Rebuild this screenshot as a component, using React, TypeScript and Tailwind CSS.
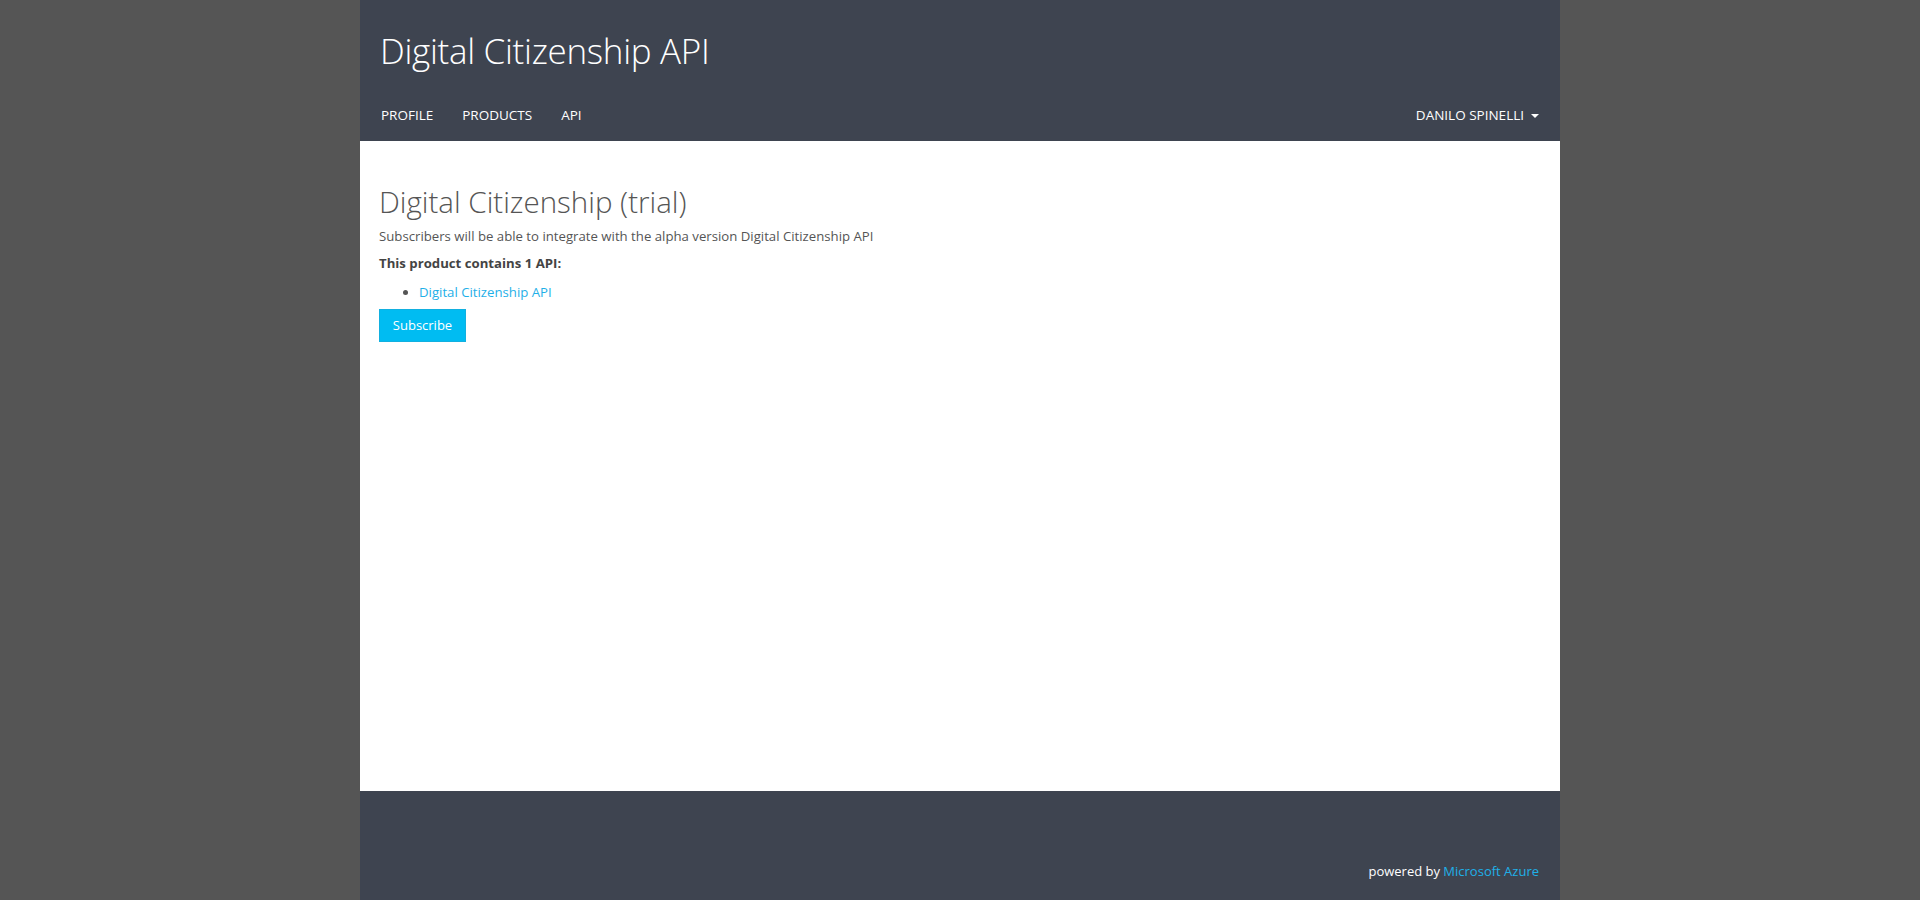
import React from "react";

export default function App() {
  return (
    <div className="min-h-[900px] bg-[#555555] flex justify-center" style={{ fontFamily: '"Open Sans", "Noto Sans", sans-serif' }}>
      <div className="w-[1200px] flex flex-col min-h-[900px]">
        <header className="bg-[#3e4450] h-[141px] flex flex-col">
          <div className="h-[82px] flex items-center px-[20px] pt-[18px]">
            <h1 className="text-[35px] font-light text-white leading-none tracking-[-0.3px]">Digital Citizenship API</h1>
          </div>
          <nav className="flex-1 flex items-center justify-between px-[21px] pt-[8px]">
            <ul className="flex gap-[29px] text-[13.5px] text-white">
              <li>PROFILE</li>
              <li>PRODUCTS</li>
              <li>API</li>
            </ul>
            <div className="flex items-center gap-[7px] text-[13.5px] text-white">
              <span>DANILO SPINELLI</span>
              <span className="w-0 h-0 border-l-[4px] border-r-[4px] border-t-[4px] border-l-transparent border-r-transparent border-t-white" />
            </div>
          </nav>
        </header>
        <main className="bg-white h-[650px] px-[19px] pt-[44px]">
          <h2 className="text-[29.5px] font-light text-[#555555] leading-[34px]">Digital Citizenship (trial)</h2>
          <p className="text-[13.2px] text-[#555555] mt-[8px]">Subscribers will be able to integrate with the alpha version Digital Citizenship API</p>
          <p className="text-[13.2px] text-[#444444] font-bold mt-[7px]">This product contains 1 API:</p>
          <ul className="list-disc pl-[40px] mt-[9px] text-[13.2px] marker:text-[#555555]">
            <li><a className="text-[#1fb0e8]">Digital Citizenship API</a></li>
          </ul>
          <button className="mt-[7px] bg-[#00bcf2] border border-[#12b0e0] text-white text-[13px] w-[87px] h-[33px]">Subscribe</button>
        </main>
        <footer className="bg-[#3e4450] flex-1 flex items-end justify-end px-[21px] pb-[19px]">
          <span className="text-[13px] text-white">powered by <a className="text-[#1fb0e8]">Microsoft Azure</a></span>
        </footer>
      </div>
    </div>
  );
}
